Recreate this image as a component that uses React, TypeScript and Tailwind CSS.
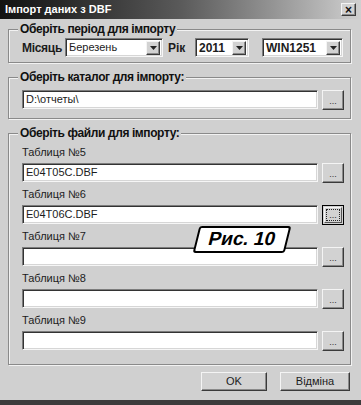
import React from 'react';

const sunken =
  'border border-t-[#7c7c7c] border-l-[#7c7c7c] border-b-[#f6f6f6] border-r-[#f6f6f6] shadow-[inset_1px_1px_0_#333,inset_-1px_-1px_0_#d6d6d6] bg-white';
const raised =
  'border border-t-[#f4f4f4] border-l-[#f4f4f4] border-b-[#3a3a3a] border-r-[#3a3a3a] shadow-[inset_-1px_-1px_0_#8a8a8a] bg-[#d2d2d2]';

function Arrow() {
  return (
    <svg width="7" height="4" viewBox="0 0 7 4">
      <path d="M0 0h7L3.5 4z" fill="#222" />
    </svg>
  );
}

function Select({ value, width, bold }: { value: string; width: string; bold?: boolean }) {
  return (
    <div className={`${sunken} ${width} h-[19px] flex items-center justify-between pl-[3px] pr-[2px]`}>
      <span className={bold ? 'font-bold text-[12px]' : ''}>{value}</span>
      <div className={`${raised} w-[14px] h-[14px] flex items-center justify-center`}>
        <Arrow />
      </div>
    </div>
  );
}

function Browse({ focused }: { focused?: boolean }) {
  if (focused) {
    return (
      <div className="w-[22px] h-[20px] border border-black bg-[#d2d2d2] p-[1px]">
        <div className="w-full h-full border border-t-[#f4f4f4] border-l-[#f4f4f4] border-b-[#555] border-r-[#555] p-[1px]">
          <div className="w-full h-full border border-dotted border-[#222] flex items-end justify-center text-[9px] leading-[9px]">
            ...
          </div>
        </div>
      </div>
    );
  }
  return (
    <div className={`${raised} w-[22px] h-[20px] flex items-end justify-center pb-[3px] text-[9px] leading-[9px] text-[#333]`}>
      ...
    </div>
  );
}

function PathRow({ value, focused }: { value: string; focused?: boolean }) {
  return (
    <div className="flex items-start gap-[4px] h-[20px]">
      <div className={`${sunken} flex-1 h-[19px] flex items-center pl-[3px]`}>{value}</div>
      <Browse focused={focused} />
    </div>
  );
}

// group box: title pulled up over the top border line
function Group({ title, className, children }: { title: string; className: string; children: React.ReactNode }) {
  return (
    <div
      className={`flex flex-col border border-[#8a8a8a] shadow-[inset_1px_1px_0_#f2f2f2,1px_1px_0_#f2f2f2] ${className}`}
    >
      <div className="-mt-[8px] ml-[9px] w-fit px-[2px] bg-[#d0d0d0] font-bold text-[12px] leading-[14px] tracking-[-0.4px] text-[#111]">
        {title}
      </div>
      <div className="pl-[13px] pr-[6px]">{children}</div>
    </div>
  );
}

const tables = [
  { n: 5, value: 'E04T05C.DBF' },
  { n: 6, value: 'E04T06C.DBF', focused: true },
  { n: 7, value: '' },
  { n: 8, value: '' },
  { n: 9, value: '' },
];

export default function App() {
  return (
    <div className="relative w-[361px] h-[405px] overflow-hidden flex flex-col bg-[#d0d0d0] text-[11px] text-[#1c1c1c] font-['Liberation_Sans',Arial,sans-serif]">
      <div className="h-[19px] shrink-0 flex items-center justify-between pl-[5px] pr-[5px] bg-linear-to-r from-[#121212] via-[#5a5a5a] to-[#d0d0d0]">
        <span className="text-white font-bold text-[11px]">Імпорт даних з DBF</span>
        <div className={`${raised} w-[15px] h-[13px] flex items-center justify-center text-[12px] leading-none font-bold text-[#111]`}>
          ×
        </div>
      </div>

      <div className="flex flex-col pl-[8px] pr-[10px]">
        <Group title="Оберіть період для імпорту" className="mt-[10px] pb-[5px]">
          <div className="flex items-center pt-[2px]">
            <span className="w-[43px] font-bold text-[12px] tracking-[-0.3px]">Місяць</span>
            <Select value="Березень" width="w-[98px]" />
            <span className="ml-[5px] w-[27px] font-bold text-[12px]">Рік</span>
            <Select value="2011" width="w-[54px]" bold />
            <div className="ml-[13px]">
              <Select value="WIN1251" width="w-[81px]" bold />
            </div>
          </div>
        </Group>

        <Group title="Оберіть каталог для імпорту:" className="mt-[14px] pb-[8px]">
          <div className="pt-[6px]">
            <PathRow value="D:\отчеты\" />
          </div>
        </Group>

        <Group title="Оберіть файли для імпорту:" className="mt-[14px] pb-[13px]">
          <div className="flex flex-col gap-[4px] pt-[5px]">
            {tables.map((t) => (
              <div key={t.n} className="flex flex-col gap-[4px]">
                <span className="leading-[14px]">Таблиця №{t.n}</span>
                <PathRow value={t.value} focused={t.focused} />
              </div>
            ))}
          </div>
        </Group>

        <div className="mt-[7px] flex justify-end gap-[13px] pr-[1px]">
          <div className={`${raised} w-[66px] h-[19px] flex items-center justify-center`}>OK</div>
          <div className={`${raised} w-[70px] h-[19px] flex items-center justify-center`}>Відміна</div>
        </div>
      </div>

      <div className="mt-auto h-[5px] bg-[#3c3c3c]" />

      <div className="absolute left-[196px] top-[226px] w-[92px] h-[27px] border-2 border-black rounded-[3px] bg-white -skew-x-[14deg] flex items-center justify-center">
        <span className="font-bold text-[19px] text-black">Рис. 10</span>
      </div>
    </div>
  );
}
